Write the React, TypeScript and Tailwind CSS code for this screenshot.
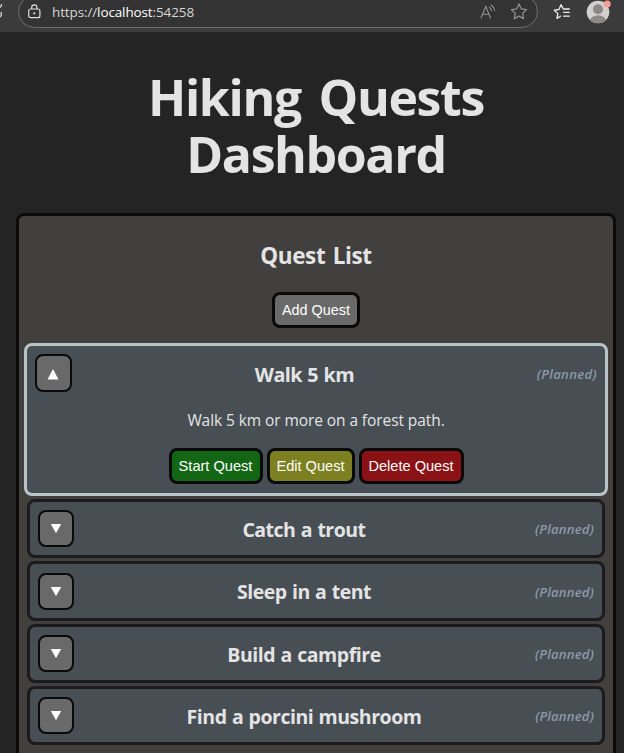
import React from "react";

const segoe = "font-['Open_Sans','Noto_Sans',sans-serif]";
const arial = "font-['Liberation_Sans',Arial,sans-serif]";

const quests = [
  { title: "Catch a trout", row: "h-[59px] mb-[3px]", spacing: "tracking-[-0.5px]" },
  { title: "Sleep in a tent", row: "h-[60px] mb-[3px]", spacing: "tracking-[-0.5px]" },
  { title: "Build a campfire", row: "h-[59px] mb-[3px]", spacing: "tracking-[-0.46px]" },
  { title: "Find a porcini mushroom", row: "h-[59px]", spacing: "tracking-[-0.48px]" },
];

function Toggle({ open = false }: { open?: boolean }) {
  return (
    <button className={`flex shrink-0 items-center justify-center rounded-lg border-2 border-[#0a0a0a] bg-[#696969] ${open ? "-mt-1 h-[38px] w-[37px]" : "h-[37px] w-9"}`}>
      <svg className={open ? "mt-0.5 mr-px" : ""} width="12" height="11" viewBox="0 0 12 11" fill="white">
        {open ? <path d="M6 0 11.5 10.5H.5Z" /> : <path d="M.8 1H11.2L6 10.3Z" />}
      </svg>
    </button>
  );
}

function Status({ open = false }: { open?: boolean }) {
  return (
    <span className={`flex w-[60px] justify-end text-[13.2px] leading-5 font-semibold whitespace-nowrap text-[#8a99a8] italic ${open ? "-mt-0.5 tracking-[0.3px]" : "pt-px tracking-[0.15px]"}`}>
      (Planned)
    </span>
  );
}

function Action({ label, className }: { label: string; className: string }) {
  return (
    <button className={`${arial} flex h-9 items-center justify-center rounded-lg border-3 border-[#0a0a0a] whitespace-nowrap text-white ${className}`}>
      {label}
    </button>
  );
}

function Toolbar() {
  return (
    <header className="flex h-8 items-start overflow-hidden bg-[#3b3b3b]">
      <svg className="mt-1 shrink-0" width="18" height="17" fill="none" stroke="#d5d5d5" strokeWidth="1.3">
        <path d="M0 3.5Q2 2 1.3 0M0 13Q2 11 1 8" />
      </svg>
      <div className="-mt-[5px] flex h-[33px] w-[520px] shrink-0 items-center rounded-full border border-[#6f6f6f] bg-[#333]">
        <svg className="ml-[9px]" width="13" height="15" viewBox="0 0 13 15" fill="none" stroke="#ddd" strokeWidth="1.2">
          <rect x=".7" y="5" width="11.2" height="8.7" rx="2" />
          <path d="M3.7 5V3.4a2.6 2.6 0 0 1 5.2 0V5" />
          <circle cx="6.3" cy="9.3" r=".5" fill="#ddd" />
        </svg>
        <span className="ml-[11px] w-[143px] text-[13.5px] leading-5 tracking-[-0.12px] whitespace-nowrap text-[#d6d6d6]">
          https://<span className="text-white">localhost</span>:54258
        </span>
        <svg className="ml-[285px]" width="17" height="16" viewBox="0 0 17 16" fill="none" stroke="#929292" strokeWidth="1.1" strokeLinecap="round">
          <path d="M1 14 5.8 2.5 10.5 14M2.7 10.2h6.2M9.4 3.2q1.8 1.1 2 3.5M11.2 1q3 2 3.4 5.5" />
        </svg>
        <svg className="ml-[13px]" width="18" height="17" viewBox="0 0 18 17" fill="none" stroke="#929292" strokeWidth="1.2" strokeLinejoin="round">
          <path d="m9 1 2.3 4.9 5.3.7-3.9 3.7.9 5.3L9 13.1l-4.7 2.5.9-5.3-3.8-3.7 5.3-.7Z" />
        </svg>
      </div>
      <svg className="mt-[3px] ml-[15px] shrink-0" width="19" height="17" viewBox="0 0 19 17" fill="none" stroke="#eee" strokeWidth="1.3" strokeLinejoin="round" strokeLinecap="round">
        <path d="M7.5 13.2 4 15.4l.8-4.8L1.3 7.2l4.6-.7L8.1 1.7l2.2 4.3h6M10.6 9.3h5.7M10.6 13.2h5.7" />
      </svg>
      <svg className="ml-[14px] shrink-0" width="26" height="25" viewBox="0 0 26 25">
        <clipPath id="avatar"><circle cx="12" cy="12" r="11.3" /></clipPath>
        <circle cx="12" cy="12" r="11.3" fill="#d2d0ce" />
        <g clipPath="url(#avatar)" fill="#8c8986">
          <circle cx="12" cy="9.2" r="5" />
          <ellipse cx="12" cy="21" rx="8" ry="5.7" />
        </g>
        <circle cx="21.2" cy="4" r="3.5" fill="#ff9c96" />
      </svg>
    </header>
  );
}

export default function App() {
  return (
    <div className={`${segoe} h-[753px] overflow-hidden bg-[#242424] text-[#e4e4e4]`}>
      <Toolbar />
      <main className="px-4 pr-2">
        <h1 className="flex h-[181px] flex-col items-center pt-[37px] text-[50px] leading-[57px] font-bold">
          <span className="tracking-[-1.35px] [word-spacing:6px]">Hiking Quests</span>
          <span className="tracking-[-1.4px]">Dashboard</span>
        </h1>
        <section className="flex h-[560px] flex-col rounded-lg border-3 border-[#0a0a0a] bg-[#423f3f] px-2">
          <h2 className="mt-[25px] text-center text-[22.5px] leading-[30px] font-bold tracking-[-0.4px] [word-spacing:2px]">Quest List</h2>
          <div className="mt-[21px] flex justify-center">
            <Action label="Add Quest" className="w-[88px] bg-[#696969] pt-px text-[14.4px]" />
          </div>
          <article className="-mx-[3px] mt-[15px] mb-[3px] h-[153px] shrink-0 rounded-lg border-3 border-[#b7c5c7] bg-[#474e54]">
            <div className="flex h-[58px] items-center justify-between px-2">
              <Toggle open />
              <h3 className="text-[19.8px] leading-7 font-bold tracking-[-0.6px] [word-spacing:1px]">Walk 5 km</h3>
              <Status open />
            </div>
            <p className="mt-1 text-center text-[15.5px] leading-6 tracking-[-0.08px]">Walk 5 km or more on a forest path.</p>
            <div className="mt-4 flex justify-center gap-1">
              <Action label="Start Quest" className="w-[94px] bg-[#126614] pt-0.5 text-[14.6px]" />
              <Action label="Edit Quest" className="w-[88px] bg-[#7c8020] pt-0.5 text-[14.6px]" />
              <Action label="Delete Quest" className="w-[105px] bg-[#8b1214] pt-0.5 text-[14.6px]" />
            </div>
          </article>
          {quests.map(({ title, row, spacing }) => (
            <article key={title} className={`flex shrink-0 items-center justify-between rounded-lg border-3 border-[#1c1a1b] bg-[#474e54] px-2 ${row}`}>
              <Toggle />
              <h3 className={`pt-0.5 text-[19.5px] leading-7 font-bold [word-spacing:0.8px] ${spacing}`}>{title}</h3>
              <Status />
            </article>
          ))}
        </section>
      </main>
    </div>
  );
}
